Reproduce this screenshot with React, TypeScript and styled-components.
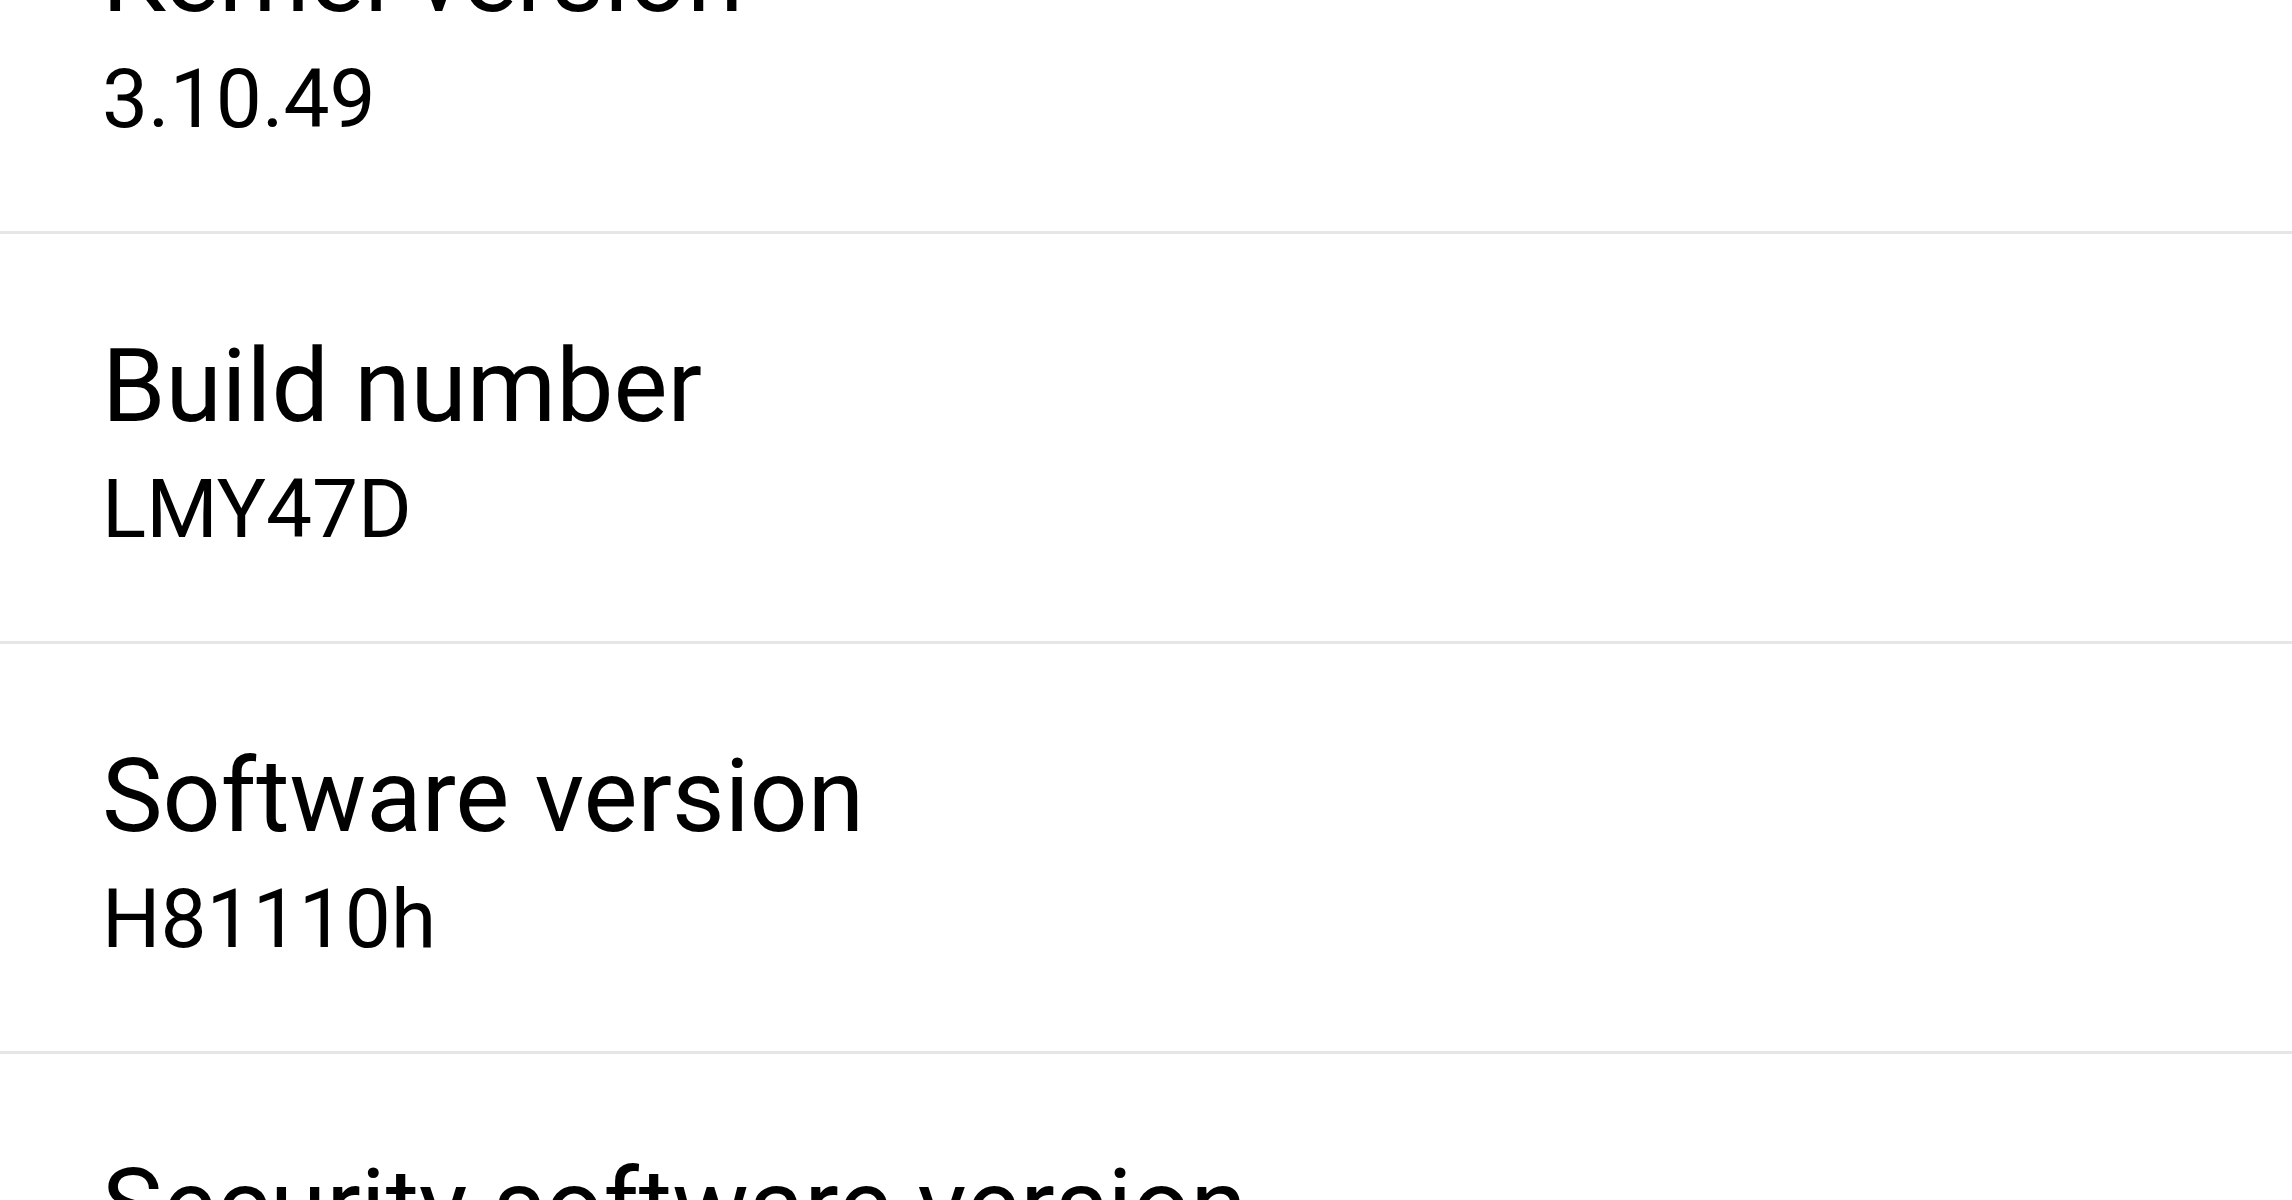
import React from "react";
import styled, { createGlobalStyle } from "styled-components";

const GlobalStyle = createGlobalStyle`
  html, body {
    margin: 0;
    padding: 0;
    background: #ffffff;
    overflow: hidden;
  }
  body {
    font-family: Roboto, "Noto Sans", "Liberation Sans", sans-serif;
    color: #000000;
  }
`;

const Screen = styled.div`
  width: 2292px;
  height: 1200px;
  overflow: hidden;
  background: #ffffff;
`;

const List = styled.ul`
  list-style: none;
  margin: -176px 0 0 0;
  padding: 0;
  display: flex;
  flex-direction: column;
`;

const Row = styled.li`
  display: flex;
  flex-direction: column;
  padding: 92px 0 82px 102px;
  border-bottom: 3px solid #e6e6e6;
`;

const Title = styled.div`
  font-family: Roboto, "Noto Sans", "Liberation Sans", sans-serif;
  font-size: 102px;
  line-height: 120px;
  font-weight: 400;
  color: #000000;
  white-space: nowrap;
`;

const Summary = styled.div`
  margin-top: 13px;
  font-family: Roboto, "Noto Sans", "Liberation Sans", sans-serif;
  font-size: 82px;
  line-height: 100px;
  font-weight: 400;
  color: #000000;
  white-space: nowrap;
`;

const items = [
  { title: "Kernel version", summary: "3.10.49" },
  { title: "Build number", summary: "LMY47D" },
  { title: "Software version", summary: "H81110h" },
  { title: "Security software version", summary: "MDF v1.1 Release 1" },
];

export default function App() {
  return (
    <Screen>
      <GlobalStyle />
      <List>
        {items.map((it) => (
          <Row key={it.title}>
            <Title>{it.title}</Title>
            <Summary>{it.summary}</Summary>
          </Row>
        ))}
      </List>
    </Screen>
  );
}
